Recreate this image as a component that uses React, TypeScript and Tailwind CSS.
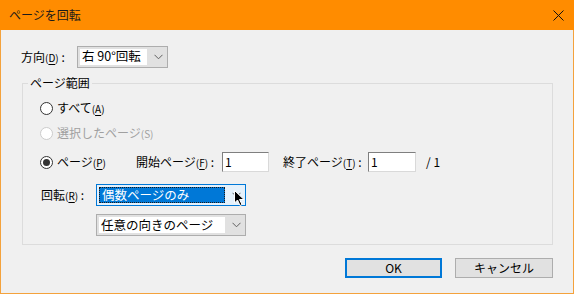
import React from 'react';

const font = { fontFamily: '"Noto Sans CJK JP", "Noto Sans", sans-serif' };

function Chevron({ className = '' }: { className?: string }) {
  return (
    <svg width="9" height="6" viewBox="0 0 9 6" className={className}>
      <path d="M0.5 0.8 L4.5 4.8 L8.5 0.8" fill="none" stroke="#606060" strokeWidth="1" />
    </svg>
  );
}

function Mn({ children }: { children: React.ReactNode }) {
  // mnemonic letter in parentheses, underlined
  return (
    <span className="text-[10px]">
      (<span className="underline underline-offset-[2px]">{children}</span>)
    </span>
  );
}

function Radio({ checked, disabled }: { checked?: boolean; disabled?: boolean }) {
  return (
    <span
      className={
        'flex h-[13px] w-[13px] items-center justify-center rounded-full border bg-white ' +
        (disabled ? 'border-[#cccccc] bg-[#f0f0f0]' : 'border-[#333333]')
      }
    >
      {checked && <span className="h-[7px] w-[7px] rounded-full bg-[#333333]" />}
    </span>
  );
}

function Select({ value, width, focused }: { value: string; width: string; focused?: boolean }) {
  return (
    <div
      className={
        'relative flex h-[22px] items-center border ' +
        width +
        (focused ? ' border-[#0078d7] bg-[#e5f1fb]' : ' border-[#adadad] bg-[#e1e1e1]')
      }
    >
      <div className="flex h-full flex-1 items-center p-[2px]">
        <div
          className={
            'flex h-full w-full items-center pl-[2px] text-[12.5px] leading-none ' +
            (focused ? 'border border-dotted border-[#1a1a1a] bg-[#0078d7] text-white' : 'bg-white text-black')
          }
        >
          {value}
        </div>
      </div>
      <div className="flex w-[18px] items-center justify-center">
        <Chevron />
      </div>
    </div>
  );
}

function TextBox({ value, width }: { value: string; width: string }) {
  return (
    <div
      className={
        'flex h-[20px] items-center border border-t-[#7f7f7f] border-l-[#7f7f7f] border-r-[#d9d9d9] border-b-[#d9d9d9] bg-white pl-[2px] text-[12px] leading-none ' +
        width
      }
    >
      {value}
    </div>
  );
}

export default function App() {
  return (
    <div
      style={font}
      className="flex h-[294px] w-[574px] flex-col border border-t-0 border-[#f4a23c] bg-[#f0f0f0] text-[12px] text-black"
    >
      {/* Title bar */}
      <div className="-mx-px flex h-[30px] items-center justify-between bg-[#ff8c00] pl-[9px] pr-[10px]">
        <span className="text-[12px] leading-none text-[#1a1a1a]">ページを回転</span>
        <svg width="11" height="11" viewBox="0 0 11 11">
          <path d="M0.5 0.5 L10.5 10.5 M10.5 0.5 L0.5 10.5" stroke="#111111" strokeWidth="1" />
        </svg>
      </div>

      {/* 方向 */}
      <div className="mt-[15px] flex h-[23px] items-center pl-[20px]">
        <span className="w-[56px] leading-none">
          方向<Mn>D</Mn> :
        </span>
        <Select value="右 90°回転" width="w-[91px]" />
      </div>

      {/* ページ範囲 */}
      <fieldset className="ml-[21px] mt-[7px] w-[531px] border border-[#dcdcdc] px-0 pb-[8px]">
        <legend className="ml-[5px] px-[2px] text-[12px] leading-[16px]">ページ範囲</legend>

        <div className="mt-[8px] flex h-[18px] items-center gap-[4px] pl-[17px]">
          <Radio />
          <span className="leading-none">
            すべて<Mn>A</Mn>
          </span>
        </div>

        <div className="mt-[7px] flex h-[18px] items-center gap-[4px] pl-[17px] text-[#a0a0a0]">
          <Radio disabled />
          <span className="leading-none">
            選択したページ<span className="text-[10px]">(S)</span>
          </span>
        </div>

        <div className="mt-[10px] flex h-[20px] items-center pl-[17px]">
          <Radio checked />
          <span className="ml-[4px] w-[79px] leading-none">
            ページ<Mn>P</Mn>
          </span>
          <span className="w-[86px] leading-none">
            開始ページ<Mn>F</Mn> :
          </span>
          <TextBox value="1" width="w-[47px]" />
          <span className="ml-[14px] w-[85px] leading-none">
            終了ページ<Mn>T</Mn> :
          </span>
          <TextBox value="1" width="w-[48px]" />
          <span className="ml-[10px] leading-none">/ 1</span>
        </div>

        <div className="mt-[12px] flex h-[22px] items-center pl-[18px]">
          <span className="w-[55px] leading-none">
            回転<Mn>R</Mn> :
          </span>
          <div className="relative">
            <Select value="偶数ページのみ" width="w-[150px]" focused />
            {/* mouse pointer */}
            <svg
              width="11"
              height="17"
              viewBox="0 0 11 17"
              className="absolute left-[138px] top-[6px]"
            >
              <path d="M0.5 0.5 L0.5 13 L3.5 10 L6 15.5 L8 14.5 L5.5 9.5 L10 9.5 Z" fill="#000" stroke="#fff" strokeWidth="1" />
            </svg>
          </div>
        </div>

        <div className="mt-[8px] flex h-[22px] items-center pl-[73px]">
          <Select value="任意の向きのページ" width="w-[150px]" />
        </div>
      </fieldset>

      {/* Buttons */}
      <div className="mt-[13px] flex justify-end gap-[13px] pr-[20px]">
        <button className="h-[20px] w-[97px] border-2 border-[#0078d7] bg-[#e1e1e1] text-[12px] leading-none">
          OK
        </button>
        <button className="h-[20px] w-[98px] border border-[#adadad] bg-[#e1e1e1] text-[12px] leading-none">
          キャンセル
        </button>
      </div>
    </div>
  );
}
